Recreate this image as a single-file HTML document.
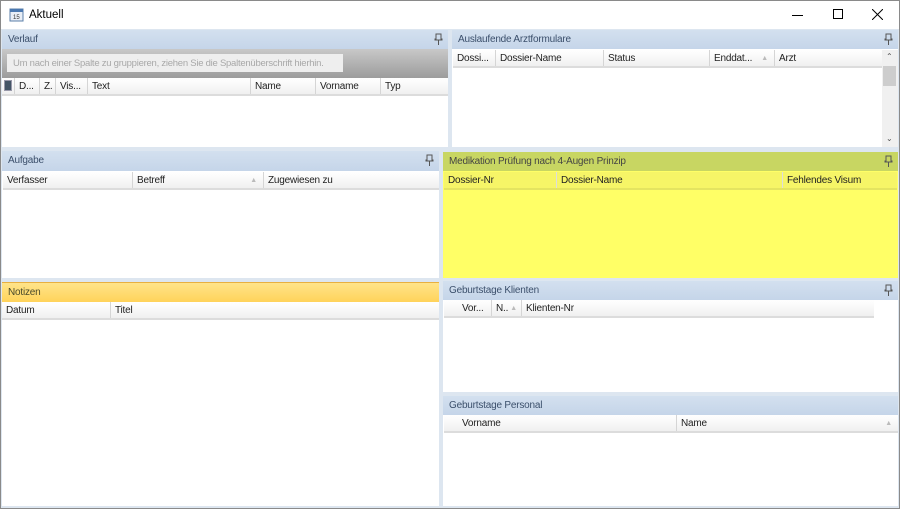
<!DOCTYPE html>
<html><head><meta charset="utf-8"><style>
*{margin:0;padding:0;box-sizing:border-box}
body{width:900px;height:509px;overflow:hidden;background:#fff;font-family:"Liberation Sans",sans-serif;font-size:10px;color:#222;position:relative}
.win{position:absolute;left:0;top:0;width:900px;height:509px;border:1px solid #8a8a8a;background:#dde6f0}
.tb{position:absolute;left:0;top:0;width:898px;height:28px;background:#fff}
.p{position:absolute;background:#fff}
.h{position:absolute;left:0;top:0;right:0;height:19px;background:linear-gradient(#d3e0ef,#c5d5e9);color:#3b4f6b;font-size:10px;letter-spacing:-0.2px;padding:4px 0 0 6px;white-space:nowrap}
.pin{position:absolute;right:5px;top:3px;width:9px;height:12px}
.cols{position:absolute;left:1px;height:18px;display:flex;background:linear-gradient(#fff,#f0f0f0);border-bottom:2px solid #dcdcdc}
.cols div{border-right:1px solid #d5d5d5;padding:3px 0 0 4px;white-space:nowrap;overflow:hidden;position:relative;font-size:10px;letter-spacing:-0.2px}
.tri{position:absolute;right:6px;top:5px;color:#bbb;font-size:7px}
</style></head><body>
<div class="win">
<div class="tb">
 <svg style="position:absolute;left:8px;top:6px" width="16" height="16" viewBox="0 0 16 16"><rect x="1" y="2" width="13" height="12" fill="#e8eef6" stroke="#5b7fa8"/><rect x="1" y="2" width="13" height="3" fill="#4a78b0"/><text x="4" y="12" font-size="6" fill="#333" font-family="Liberation Sans">15</text></svg>
 <div style="position:absolute;left:28px;top:8px;font-size:11.5px;color:#000">Aktuell</div>
 <div style="position:absolute;left:791px;top:14px;width:11px;height:1px;background:#000"></div>
 <div style="position:absolute;left:832px;top:8px;width:10px;height:10px;border:1px solid #000"></div>
 <svg style="position:absolute;left:871px;top:8px" width="11" height="11"><path d="M0 0L11 11M11 0L0 11" stroke="#000" stroke-width="1"/></svg>
</div>

<!-- Verlauf -->
<div class="p" style="left:1px;top:29px;width:446px;height:117px">
 <div class="h">Verlauf<svg class="pin" viewBox="0 0 9 12"><path d="M2 1h5v5h1v1H1V6h1zM4.5 7v5" fill="none" stroke="#555"/></svg></div>
 <div style="position:absolute;left:0;top:19px;width:446px;height:29px;background:linear-gradient(#c8c8c8,#9c9c9c)"></div>
 <div style="position:absolute;left:5px;top:24px;width:336px;height:18px;background:#eee;color:#a8a8a8;padding:4px 0 0 6px;font-size:9.5px;letter-spacing:-0.25px;white-space:nowrap;overflow:hidden">Um nach einer Spalte zu gruppieren, ziehen Sie die Spaltenüberschrift hierhin.</div>
 <div class="cols" style="top:48px;left:0;width:446px">
  <div style="width:13px;padding:2px 0 0 2px"><span style="display:block;width:8px;height:11px;background:#456;border:1px solid #99a"></span></div>
  <div style="width:25px">D...</div><div style="width:16px">Z.</div><div style="width:32px">Vis...</div><div style="width:163px">Text</div><div style="width:65px">Name</div><div style="width:65px">Vorname</div><div style="width:66px;border-right:none">Typ</div>
 </div>
</div>

<!-- Auslaufende -->
<div class="p" style="left:451px;top:29px;width:446px;height:117px">
 <div class="h">Auslaufende Arztformulare<svg class="pin" viewBox="0 0 9 12"><path d="M2 1h5v5h1v1H1V6h1zM4.5 7v5" fill="none" stroke="#555"/></svg></div>
 <div class="cols" style="top:20px;left:1px;width:429px">
  <div style="width:43px">Dossi...</div><div style="width:108px">Dossier-Name</div><div style="width:106px">Status</div><div style="width:65px">Enddat...<span class="tri">▲</span></div><div style="width:107px;border-right:none">Arzt</div>
 </div>
 <div style="position:absolute;left:430px;top:20px;width:16px;height:97px;background:#f0f0f0">
  <div style="position:absolute;left:4px;top:2px;font-size:8px;color:#555">⌃</div>
  <div style="position:absolute;left:1px;top:16px;width:13px;height:20px;background:#cdcdcd"></div>
  <div style="position:absolute;left:4px;top:84px;font-size:8px;color:#555">⌄</div>
 </div>
</div>

<!-- Aufgabe -->
<div class="p" style="left:1px;top:150px;width:437px;height:127px">
 <div class="h" style="height:20px">Aufgabe<svg class="pin" viewBox="0 0 9 12"><path d="M2 1h5v5h1v1H1V6h1zM4.5 7v5" fill="none" stroke="#555"/></svg></div>
 <div class="cols" style="top:21px;left:1px;width:436px">
  <div style="width:130px">Verfasser</div><div style="width:131px">Betreff<span class="tri">▲</span></div><div style="width:174px;border-right:none">Zugewiesen zu</div>
 </div>
</div>

<!-- Medikation -->
<div class="p" style="left:442px;top:151px;width:455px;height:126px;background:#ffff66">
 <div class="h" style="background:#c8d662;color:#444">Medikation Prüfung nach 4-Augen Prinzip<svg class="pin" viewBox="0 0 9 12"><path d="M2 1h5v5h1v1H1V6h1zM4.5 7v5" fill="none" stroke="#555"/></svg></div>
 <div class="cols" style="top:20px;left:1px;width:453px;background:#f6f567;border-bottom:2px solid #e4e460">
  <div style="width:113px;border-color:#ddd">Dossier-Nr</div><div style="width:226px;border-color:#ddd">Dossier-Name</div><div style="width:113px;border-right:none">Fehlendes Visum</div>
 </div>
</div>

<!-- Notizen -->
<div class="p" style="left:1px;top:281px;width:437px;height:224px">
 <div class="h" style="height:20px;background:linear-gradient(#ffe48a,#ffd35a);color:#4a4a2a;border-top:1px solid #e8b040">Notizen</div>
 <div class="cols" style="top:20px;left:0;width:437px">
  <div style="width:109px">Datum</div><div style="width:328px;border-right:none">Titel</div>
 </div>
</div>

<!-- Geburtstage Klienten -->
<div class="p" style="left:442px;top:280px;width:455px;height:111px">
 <div class="h">Geburtstage Klienten<svg class="pin" viewBox="0 0 9 12"><path d="M2 1h5v5h1v1H1V6h1zM4.5 7v5" fill="none" stroke="#555"/></svg></div>
 <div class="cols" style="top:19px;left:1px;width:430px">
  <div style="width:48px;padding-left:18px">Vor...</div><div style="width:30px">N..<span class="tri" style="right:4px">▲</span></div><div style="width:352px;border-right:none">Klienten-Nr</div>
 </div>
</div>

<!-- Geburtstage Personal -->
<div class="p" style="left:442px;top:395px;width:455px;height:110px">
 <div class="h">Geburtstage Personal</div>
 <div class="cols" style="top:19px;left:1px;width:454px">
  <div style="width:233px;padding-left:18px">Vorname</div><div style="width:221px;border-right:none">Name<span class="tri">▲</span></div>
 </div>
</div>
</div>
</body></html>
